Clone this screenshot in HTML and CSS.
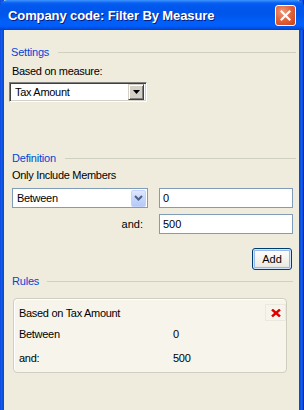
FILE: index.html
```html
<!DOCTYPE html>
<html>
<head>
<meta charset="utf-8">
<link rel="stylesheet" href="styles.css">
</head>
<body>
<div class="window">
  <div class="titlebar">
    <span class="title">Company code: Filter By Measure</span>
    <span class="close"><svg width="11" height="11" viewBox="0 0 11 11"><path d="M1.5 1.5L9.5 9.5M9.5 1.5L1.5 9.5" stroke="#fff" stroke-width="2.2" stroke-linecap="square"/></svg></span>
  </div>
  <div class="client">
    <div class="group-head g-settings"><span>Settings</span><i></i></div>
    <div class="label l-measure">Based on measure:</div>
    <div class="classic-select">
      <span class="cs-text">Tax Amount</span>
      <span class="classic-btn"><svg width="7" height="4" viewBox="0 0 7 4"><path d="M0 0H7L3.5 4Z" fill="#000"/></svg></span>
    </div>

    <div class="group-head g-def"><span>Definition</span><i></i></div>
    <div class="label l-only">Only Include Members</div>
    <div class="def-grid">
      <div class="xp-select">
        <span class="xs-text">Between</span>
        <span class="xp-btn"><svg width="9" height="6" viewBox="0 0 9 6"><path d="M1 1L4.5 4.5L8 1" fill="none" stroke="#4d6185" stroke-width="2"/></svg></span>
      </div>
      <div class="input">0</div>
      <div class="and">and:</div>
      <div class="input">500</div>
    </div>
    <div class="btn-row"><span class="add">Add</span></div>

    <div class="group-head g-rules"><span>Rules</span><i></i></div>
    <div class="rules-box">
      <div class="rule-head">
        <span>Based on Tax Amount</span>
        <span class="del"><svg width="10" height="8" viewBox="0 0 10 8"><path d="M1 0.5L9 7.5M9 0.5L1 7.5" stroke="#e00000" stroke-width="2.4"/></svg></span>
      </div>
      <div class="rule-row r-between"><span class="rk">Between</span><span>0</span></div>
      <div class="rule-row r-and"><span class="rk">and:</span><span>500</span></div>
    </div>
  </div>
</div>
</body>
</html>
```

FILE: styles.css
```css
* { box-sizing: border-box; }
html, body { margin: 0; padding: 0; background: #ffffff; }
body {
  font-family: "Liberation Sans", Arial, sans-serif;
  font-size: 11px;
  color: #000;
}
.window {
  width: 304px;
  height: 410px;
  display: flex;
  flex-direction: column;
  background: linear-gradient(to right, #0831d9 0, #166aee 1px, #0855dd 2px, #0848d8 4px, transparent 4px) left top / 4px 100% no-repeat,
              linear-gradient(to right, #0848d8 0, #0855dd 2px, #166aee 3px, #0831d9 4px, #001ea0 5px) right top / 5px 100% no-repeat;
}
.titlebar {
  height: 30px;
  flex: none;
  display: flex;
  align-items: center;
  justify-content: space-between;
  padding: 1px 8px 0 8px;
  border-radius: 7px 7px 0 0;
  background: linear-gradient(to bottom, #3d95ff 0, #0a5ff0 3px, #0058ee 6px, #0055ea 14px, #0060f8 22px, #005efc 26px, #0049d8 29px, #003dc0 30px);
}
.title {
  color: #fff;
  font-weight: bold;
  font-size: 13px;
  letter-spacing: -0.1px;
  text-shadow: 1px 1px 0 #0a1c7c;
}
.close {
  width: 21px;
  height: 21px;
  border: 1px solid #fff;
  border-radius: 3px;
  background: radial-gradient(circle at 35% 30%, #ef9a7c 0, #e2663f 45%, #cc4018 100%);
  display: flex;
  align-items: center;
  justify-content: center;
  margin-top: -1px;
}
.client {
  flex: 1;
  margin: 0 5px 0 4px;
  background-color: #efecde;
  display: flex;
  flex-direction: column;
  padding: 0 3px 0 0;
}
.group-head {
  display: flex;
  align-items: center;
  height: 13px;
  line-height: 13px;
  color: #0046d5;
  padding-left: 7px;
}
.group-head span { letter-spacing: -0.2px; }
.group-head i {
  flex: 1;
  height: 1px;
  background: #d0d0bf;
  margin-left: 9px;
}
.g-settings { margin-top: 16px; }
.g-def { margin-top: 50px; padding-left: 8px; }
.g-rules { margin-top: 5px; padding-left: 8px; }
.g-rules i { margin-left: 8px; margin-right: 3px; }
.label {
  height: 13px;
  line-height: 13px;
  padding-left: 8px;
  letter-spacing: -0.3px;
}
.l-measure { margin-top: 6px; }
.l-only { margin-top: 4px; }

.classic-select {
  margin: 4px 0 0 5px;
  width: 138px;
  height: 20px;
  background: #fff;
  border: 1px solid;
  border-color: #808080 #fff #fff #808080;
  box-shadow: inset 1px 1px 0 #404040, inset -1px -1px 0 #d4d0c8;
  display: flex;
  align-items: center;
  justify-content: space-between;
  padding: 2px 2px 2px 5px;
}
.cs-text { letter-spacing: -0.3px; }
.classic-btn {
  width: 16px;
  height: 16px;
  background: #d4d0c8;
  border: 1px solid;
  border-color: #d4d0c8 #404040 #404040 #d4d0c8;
  box-shadow: inset 1px 1px 0 #fff, inset -1px -1px 0 #808080;
  display: flex;
  align-items: center;
  justify-content: center;
}

.def-grid {
  display: grid;
  grid-template-columns: 136px 134px;
  grid-template-rows: 20px 20px;
  column-gap: 11px;
  row-gap: 6px;
  margin: 6px 0 0 8px;
}
.xp-select {
  background: #fff;
  border: 1px solid #7f9db9;
  display: flex;
  align-items: center;
  justify-content: space-between;
  padding: 0 1px 0 4px;
}
.xs-text { letter-spacing: -0.3px; }
.xp-btn {
  width: 15px;
  height: 17px;
  border-radius: 2px;
  border: 1px solid #c3d3fd;
  background: linear-gradient(to bottom, #dfe8fe 0, #c6d6fc 50%, #b6c9f6 100%);
  display: flex;
  align-items: center;
  justify-content: center;
}
.input {
  background: #fff;
  border: 1px solid #7f9db9;
  line-height: 18px;
  padding-left: 3px;
}
.and {
  text-align: right;
  line-height: 20px;
  padding-right: 5px;
}
.btn-row {
  display: flex;
  justify-content: flex-end;
  margin-top: 14px;
  padding-right: 4px;
}
.add {
  width: 40px;
  height: 22px;
  border: 1px solid #003c74;
  border-radius: 3px;
  background: linear-gradient(to bottom, #ffffff 0, #f4f3ee 50%, #ecebe6 85%, #d6d0c5 100%);
  box-shadow: inset 0 0 0 1px #cee7ff, inset 0 0 0 2px #98b8ea;
  display: flex;
  align-items: center;
  justify-content: center;
  font-size: 11px;
}

.rules-box {
  margin: 10px 0 0 9px;
  width: 274px;
  height: 75px;
  border: 1px solid #d0cebf;
  border-radius: 4px;
  background: #f6f4eb;
  box-shadow: inset 1px 1px 0 #fff;
  padding: 0 0 0 5px;
  display: flex;
  flex-direction: column;
}
.rule-head {
  display: flex;
  align-items: center;
  justify-content: space-between;
  height: 17px;
  margin-top: 5px;
  letter-spacing: -0.3px;
}
.del {
  width: 21px;
  height: 17px;
  display: flex;
  align-items: center;
  justify-content: center;
  border: 1px solid #ebe9dd;
  margin-right: 0;
}
.rule-row {
  display: flex;
  height: 13px;
  line-height: 13px;
  letter-spacing: -0.3px;
}
.rk { width: 154px; }
.r-between { margin-top: 7px; }
.r-and { margin-top: 11px; }
```
